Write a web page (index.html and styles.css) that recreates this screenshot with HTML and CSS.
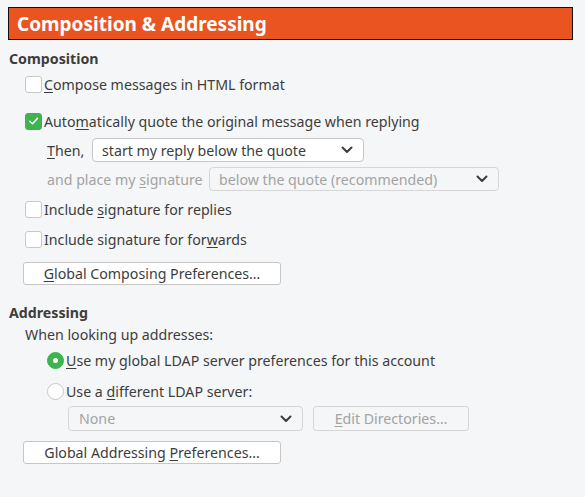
FILE: index.html
```html
<!DOCTYPE html>
<html>
<head>
<meta charset="utf-8">
<link rel="stylesheet" href="styles.css">
</head>
<body>
<div class="header">Composition &amp; Addressing</div>

<div class="section-title first">Composition</div>

<div class="row r-compose">
  <span class="check"></span>
  <span class="label"><u>C</u>ompose messages in HTML format</span>
</div>

<div class="row r-auto">
  <span class="check checked"><svg viewBox="0 0 16 16" width="16" height="16"><path d="M4 8.2 L7 11 L12.2 5.2" fill="none" stroke="#fff" stroke-width="1.6" stroke-linecap="round" stroke-linejoin="round"/></svg></span>
  <span class="label">Auto<u>m</u>atically quote the original message when replying</span>
</div>

<div class="row r-then">
  <span class="sub-label then"><u>T</u>hen,</span>
  <div class="select sel-reply">
    <span>start my reply below the quote</span>
    <svg class="chev" viewBox="0 0 12 8" width="12" height="8"><path d="M1.5 1.5 L6 6 L10.5 1.5" fill="none" stroke="#3d3d3d" stroke-width="2" stroke-linecap="round" stroke-linejoin="round"/></svg>
  </div>
</div>

<div class="row r-sig">
  <span class="sub-label disabled">and place my <u>s</u>ignature</span>
  <div class="select disabled sel-sig">
    <span>below the quote (recommended)</span>
    <svg class="chev" viewBox="0 0 12 8" width="12" height="8"><path d="M1.5 1.5 L6 6 L10.5 1.5" fill="none" stroke="#3d3d3d" stroke-width="2" stroke-linecap="round" stroke-linejoin="round"/></svg>
  </div>
</div>

<div class="row r-replies">
  <span class="check"></span>
  <span class="label">Include <u>s</u>ignature for replies</span>
</div>

<div class="row r-forwards">
  <span class="check"></span>
  <span class="label">Include signature for for<u>w</u>ards</span>
</div>

<div class="btn-row r-btn1">
  <button class="btn btn-global"><span><u>G</u>lobal Composing Preferences…</span></button>
</div>

<div class="section-title second">Addressing</div>
<div class="plain r-when">When looking up addresses:</div>

<div class="row r-radio1">
  <span class="radio on"></span>
  <span class="label"><u>U</u>se my global LDAP server preferences for this account</span>
</div>

<div class="row r-radio2">
  <span class="radio"></span>
  <span class="label">Use a <u>d</u>ifferent LDAP server:</span>
</div>

<div class="row r-none">
  <div class="select disabled sel-none">
    <span>None</span>
    <svg class="chev" viewBox="0 0 12 8" width="12" height="8"><path d="M1.5 1.5 L6 6 L10.5 1.5" fill="none" stroke="#3d3d3d" stroke-width="2" stroke-linecap="round" stroke-linejoin="round"/></svg>
  </div>
  <button class="btn disabled btn-edit"><span><u>E</u>dit Directories…</span></button>
</div>

<div class="btn-row r-btn2">
  <button class="btn btn-global"><span>Global Addressing <u>P</u>references…</span></button>
</div>
</body>
</html>
```

FILE: styles.css
```css
html, body {
  margin: 0;
  padding: 0;
  background: #f5f6f7;
}
body {
  font-family: "Noto Sans", "Open Sans", sans-serif;
  font-size: 14.2px;
  color: #3d3d3d;
  width: 585px;
  height: 497px;
  overflow: hidden;
}
u {
  text-decoration: underline;
  text-underline-offset: 2px;
}
.header {
  margin: 7px 12px 0 8px;
  height: 31px;
  border: 1px solid #111;
  background: #e95420;
  color: #fff;
  font-weight: bold;
  font-size: 19px;
  display: flex;
  align-items: center;
  padding-left: 8px;
}
.section-title {
  font-weight: bold;
  height: 18px;
  line-height: 18px;
  margin-left: 9px;
}
.section-title.first { margin-top: 10px; }
.section-title.second { margin-top: 19px; }
.row {
  display: flex;
  align-items: center;
  height: 20px;
  margin-left: 25px;
}
.label { margin-left: 2px; white-space: nowrap; }
.check {
  width: 15px;
  height: 15px;
  border: 1px solid #c8c8c8;
  border-radius: 3px;
  background: #fff;
  flex: none;
  display: flex;
  align-items: center;
  justify-content: center;
}
.check.checked {
  background: #3eb34f;
  border-color: #3eb34f;
}
.check svg { display: block; }
.r-compose { margin-top: 6px; }
.r-auto { margin-top: 17px; }
.r-then { margin-top: 7px; height: 24px; margin-left: 47px; }
.r-sig { margin-top: 5px; height: 24px; margin-left: 47px; }
.r-replies { margin-top: 8px; }
.r-forwards { margin-top: 10px; }
.sub-label { white-space: nowrap; }
.then { width: 45px; }
.disabled { color: #a3a3a3; }
.sub-label.disabled { width: 162px; }
.select {
  display: flex;
  align-items: center;
  justify-content: space-between;
  box-sizing: border-box;
  height: 24px;
  border: 1px solid #c6c6c6;
  border-radius: 4px;
  background: #fff;
  padding: 0 10px 0 9px;
  white-space: nowrap;
}
.select.disabled {
  background: #f5f6f7;
  border-color: #d6d6d6;
}
.chev { display: block; flex: none; }
.sel-reply { width: 272px; }
.sel-sig { width: 290px; }
.sel-none { width: 235px; padding-left: 10px; }
.btn-row { margin-left: 23px; }
.r-btn1 { margin-top: 13px; }
.btn {
  font-family: inherit;
  font-size: 14.2px;
  color: #3d3d3d;
  box-sizing: border-box;
  height: 23px;
  border: 1px solid #c6c6c6;
  border-radius: 3px;
  background: #fff;
  padding: 0;
  display: flex;
  align-items: center;
  justify-content: center;
  white-space: nowrap;
}
.btn-global { width: 258px; }
.btn.disabled {
  background: #f5f6f7;
  border-color: #d6d6d6;
  color: #a3a3a3;
  height: 25px;
}
.btn-edit { width: 156px; margin-left: 10px; }
.plain { margin-left: 25px; height: 18px; line-height: 18px; margin-top: 4px; }
.radio {
  width: 15px;
  height: 15px;
  border: 1px solid #c8c8c8;
  border-radius: 50%;
  background: #fff;
  flex: none;
  box-sizing: content-box;
}
.radio.on {
  background: #3eb34f;
  border-color: #3eb34f;
  position: relative;
}
.radio.on::after {
  content: "";
  position: absolute;
  left: 5px;
  top: 5px;
  width: 5px;
  height: 5px;
  border-radius: 50%;
  background: #fff;
}
.r-radio1 { margin-top: 6px; margin-left: 47px; }
.r-radio2 { margin-top: 11px; margin-left: 47px; }
.r-none { margin-top: 5px; height: 25px; margin-left: 68px; }
.sel-none { height: 25px; }
.r-btn2 { margin-top: 10px; }
```
